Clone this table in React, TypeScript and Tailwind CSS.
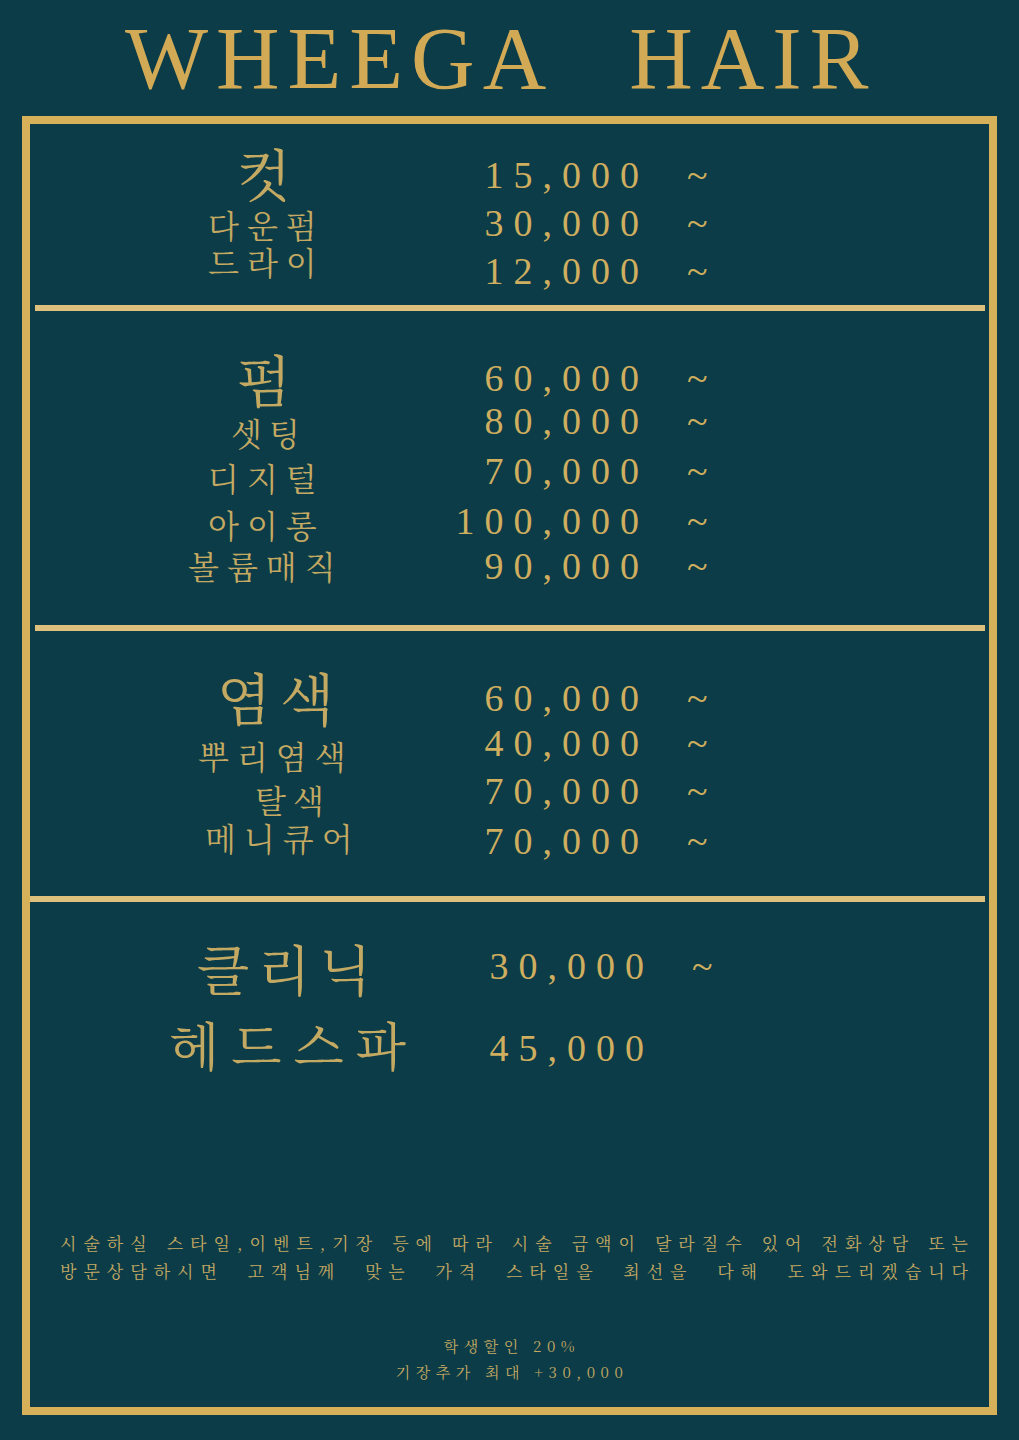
const kr = "font-['Noto_Serif_CJK_KR','Noto_Sans_CJK_KR',sans-serif]";
const serif = "font-['Liberation_Serif','Times_New_Roman',serif]";

type Label = { text: string; cls: string };
type Price = { value: string; tilde: boolean; h: string };

const Labels = ({ items, pt }: { items: Label[]; pt: string }) => (
  <div className={`w-[420px] flex flex-col ${pt} ${kr} text-[#c4a962]`}>
    {items.map((l) => (
      <div key={l.text} className={`whitespace-nowrap ${l.cls}`}>
        {l.text}
      </div>
    ))}
  </div>
);

const Prices = ({
  items,
  pt,
  numW = "w-[199px]",
  tildeMl = "ml-[38px]",
}: {
  items: Price[];
  pt: string;
  numW?: string;
  tildeMl?: string;
}) => (
  <div className={`flex flex-col ${pt} ${serif} text-[38px] leading-[40px] text-[#cfae5f]`}>
    {items.map((p, i) => (
      <div key={i} className={`flex ${p.h}`}>
        <span className={`${numW} text-right tracking-[10px] whitespace-nowrap`}>{p.value}</span>
        {p.tilde && <span className={tildeMl}>~</span>}
      </div>
    ))}
  </div>
);

const Divider = ({ ml = "ml-[5px]" }: { ml?: string }) => (
  <div className={`h-[6px] ${ml} mr-[4px] bg-[#dcc07b]`} />
);

export default function App() {
  return (
    <div className="w-[1019px] h-[1440px] bg-[#0c3c47] overflow-hidden">
      {/* title */}
      <div
        className={`h-[116px] pt-[15px] pl-[125px] flex gap-[75px] ${serif} text-[88px] leading-[88px] tracking-[8px] text-[#d2aa55]`}
      >
        <span>WHEEGA</span>
        <span>HAIR</span>
      </div>

      <div className="ml-[22px] w-[975px] h-[1299px] border-[8px] border-[#d7b05a] flex flex-col">
        {/* 컷 */}
        <div className="h-[181px] flex">
          <Labels
            pt="pt-[18px]"
            items={[
              { text: "컷", cls: "ml-[207px] h-[66px] text-[56px] leading-[60px]" },
              { text: "다운펌", cls: "ml-[178px] h-[37px] text-[32px] leading-[32px] tracking-[8px]" },
              { text: "드라이", cls: "ml-[178px] h-[40px] text-[32px] leading-[32px] tracking-[8px]" },
            ]}
          />
          <Prices
            pt="pt-[31px]"
            items={[
              { value: "15,000", tilde: true, h: "h-[48px]" },
              { value: "30,000", tilde: true, h: "h-[48px]" },
              { value: "12,000", tilde: true, h: "h-[48px]" },
            ]}
          />
        </div>
        <Divider />

        {/* 펌 */}
        <div className="h-[314px] flex">
          <Labels
            pt="pt-[37px]"
            items={[
              { text: "펌", cls: "ml-[207px] h-[68px] text-[56px] leading-[60px]" },
              { text: "셋팅", cls: "ml-[201px] h-[45px] text-[32px] leading-[32px] tracking-[7px]" },
              { text: "디지털", cls: "ml-[178px] h-[47px] text-[32px] leading-[32px] tracking-[8px]" },
              { text: "아이롱", cls: "ml-[178px] h-[41px] text-[32px] leading-[32px] tracking-[8px]" },
              { text: "볼륨매직", cls: "ml-[158px] h-[40px] text-[32px] leading-[32px] tracking-[8px]" },
            ]}
          />
          <Prices
            pt="pt-[47px]"
            items={[
              { value: "60,000", tilde: true, h: "h-[43px]" },
              { value: "80,000", tilde: true, h: "h-[50px]" },
              { value: "70,000", tilde: true, h: "h-[50px]" },
              { value: "100,000", tilde: true, h: "h-[45px]" },
              { value: "90,000", tilde: true, h: "h-[48px]" },
            ]}
          />
        </div>
        <Divider />

        {/* 염색 */}
        <div className="h-[265px] flex">
          <Labels
            pt="pt-[35px]"
            items={[
              { text: "염색", cls: "ml-[187px] h-[73px] text-[56px] leading-[60px] tracking-[9px]" },
              { text: "뿌리염색", cls: "ml-[168px] h-[44px] text-[32px] leading-[32px] tracking-[8px]" },
              { text: "탈색", cls: "ml-[225px] h-[38px] text-[32px] leading-[32px] tracking-[7px]" },
              { text: "메니큐어", cls: "ml-[175px] h-[40px] text-[32px] leading-[32px] tracking-[8px]" },
            ]}
          />
          <Prices
            pt="pt-[47px]"
            items={[
              { value: "60,000", tilde: true, h: "h-[45px]" },
              { value: "40,000", tilde: true, h: "h-[48px]" },
              { value: "70,000", tilde: true, h: "h-[50px]" },
              { value: "70,000", tilde: true, h: "h-[48px]" },
            ]}
          />
        </div>
        <Divider ml="ml-0" />

        {/* 클리닉 / 헤드스파 + notes */}
        <div className="flex-1 flex flex-col">
          <div className="flex">
            <Labels
              pt="pt-[36px]"
              items={[
                { text: "클리닉", cls: "ml-[167px] h-[76px] text-[54px] leading-[60px] tracking-[9px]" },
                { text: "헤드스파", cls: "ml-[139px] h-[60px] text-[52px] leading-[60px] tracking-[12px]" },
              ]}
            />
            <Prices
              pt="pt-[44px]"
              numW="w-[204px]"
              items={[
                { value: "30,000", tilde: true, h: "h-[82px]" },
                { value: "45,000", tilde: false, h: "h-[44px]" },
              ]}
            />
          </div>

          <div
            className={`mt-[155px] pl-[30px] pr-[14px] ${kr} text-[17px] leading-[28px] tracking-[7px] text-[#c4a962] whitespace-nowrap text-justify [text-align-last:justify]`}
          >
            <div>시술하실 스타일,이벤트,기장 등에 따라 시술 금액이 달라질수 있어 전화상담 또는</div>
            <div>방문상담하시면 고객님께 맞는 가격 스타일을 최선을 다해 도와드리겠습니다</div>
          </div>

          <div
            className={`mt-[48px] pl-[5px] flex flex-col items-center ${kr} text-[15px] leading-[26px] tracking-[5.5px] text-[#c4a962]`}
          >
            <div>학생할인 20%</div>
            <div>기장추가 최대 +30,000</div>
          </div>
        </div>
      </div>
    </div>
  );
}
